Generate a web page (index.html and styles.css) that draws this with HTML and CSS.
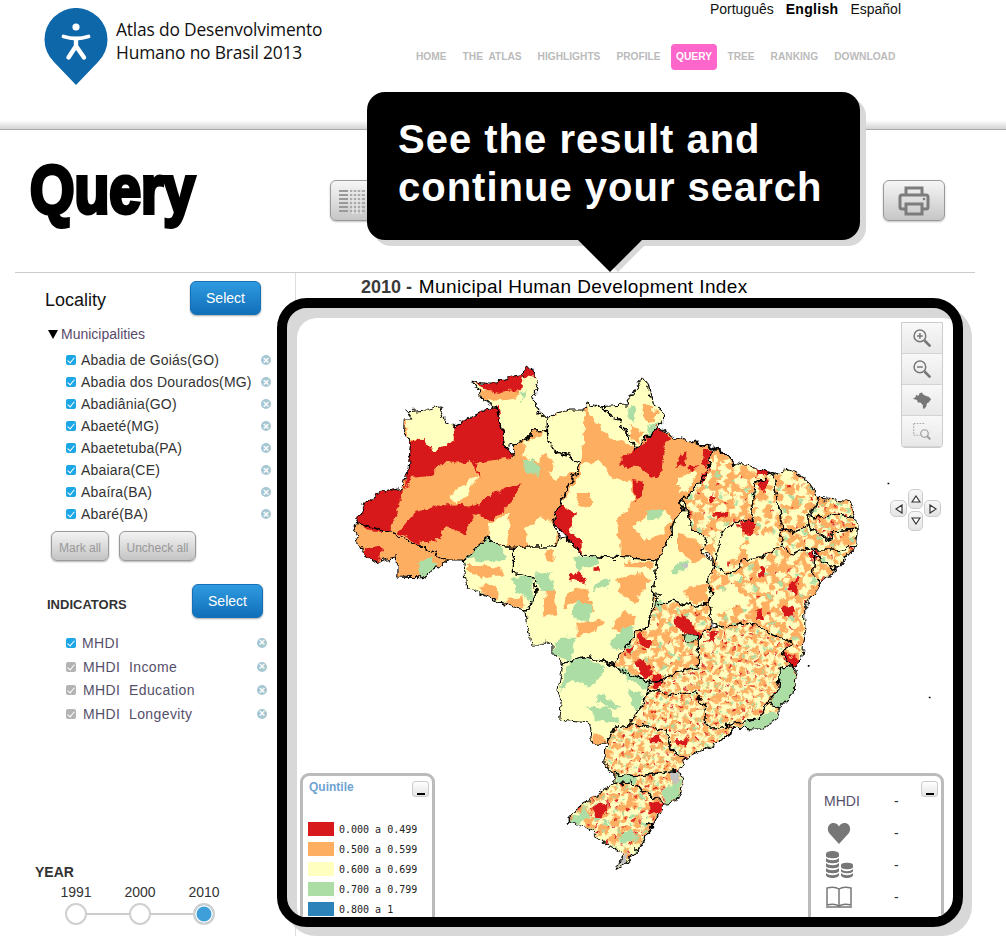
FILE: index.html
```html
<!DOCTYPE html>
<html lang="en">
<head>
<meta charset="utf-8">
<title>Atlas do Desenvolvimento Humano no Brasil 2013 - Query</title>
<link rel="stylesheet" href="styles.css">
</head>
<body>
<header class="site-header">
  <a class="logo">
    <svg class="logo-pin" viewBox="0 0 64 78" width="64" height="78">
      <path d="M32 77 L10 54 A31.5 31.5 0 1 1 54 54 Z" fill="#0d67a9"/>
      <circle cx="32" cy="19" r="3.6" fill="#fff"/>
      <path d="M19.500 28.500 Q32 32.500 44.500 28.500" fill="none" stroke="#fff" stroke-width="3.8" stroke-linecap="round"/>
      <path d="M32 31 V38 M32 38 L24.500 49.500 M32 38 L40 49.500" fill="none" stroke="#fff" stroke-width="4.4" stroke-linecap="round"/>
    </svg>
    <span class="logo-text">Atlas do Desenvolvimento<br>Humano no Brasil 2013</span>
  </a>
  <div class="header-right">
    <div class="langs"><span>Português</span><strong>English</strong><span>Español</span></div>
    <nav class="nav">
      <a>HOME</a><a>THE ATLAS</a><a>HIGHLIGHTS</a><a>PROFILE</a><a class="active">QUERY</a><a>TREE</a><a>RANKING</a><a>DOWNLOAD</a>
    </nav>
  </div>
</header>
<div class="band"></div>

<section class="page-head">
  <h1 class="page-title">Query</h1>
  <div class="tools">
    <button class="tool-btn">
      <svg viewBox="0 0 26 26" width="26" height="26"><path d="M0 2h9v2H0zM0 6h9v2H0zM0 10h9v2H0zM0 14h9v2H0zM0 18h9v2H0zM0 22h9v2H0z" fill="#999"/><path d="M11 2h15v2H11zM11 6h15v2H11zM11 10h15v2H11zM11 14h15v2H11zM11 18h15v2H11zM11 22h15v2H11z" fill="#aaa"/><path d="M14 0v26M18 0v26M22 0v26" stroke="#e8e8e8" stroke-width="1.5"/></svg>
    </button>
    <button class="tool-btn">
      <svg viewBox="0 0 32 30" width="32" height="30"><path d="M8 9V2h16v7M7 23H4a2 2 0 0 1-2-2V11a2 2 0 0 1 2-2h24a2 2 0 0 1 2 2v10a2 2 0 0 1-2 2h-3M8 18h16v10H8z" fill="none" stroke="#7c7c7c" stroke-width="3"/><circle cx="26" cy="13" r="1.3" fill="#7c7c7c"/></svg>
    </button>
  </div>
</section>

<div class="content">
  <aside class="sidebar">
    <div class="side-head">
      <h2 class="locality-title">Locality</h2>
      <button class="select-btn">Select</button>
    </div>
    <div class="tree-label"><span class="tri"></span>Municipalities</div>
    <ul class="loc-list">
      <li><i class="cb"></i>Abadia de Goiás(GO)<b class="rm">×</b></li>
      <li><i class="cb"></i>Abadia dos Dourados(MG)<b class="rm">×</b></li>
      <li><i class="cb"></i>Abadiânia(GO)<b class="rm">×</b></li>
      <li><i class="cb"></i>Abaeté(MG)<b class="rm">×</b></li>
      <li><i class="cb"></i>Abaetetuba(PA)<b class="rm">×</b></li>
      <li><i class="cb"></i>Abaiara(CE)<b class="rm">×</b></li>
      <li><i class="cb"></i>Abaíra(BA)<b class="rm">×</b></li>
      <li><i class="cb"></i>Abaré(BA)<b class="rm">×</b></li>
    </ul>
    <div class="mark-row">
      <button class="mark-btn mark-a">Mark all</button>
      <button class="mark-btn mark-b">Uncheck all</button>
    </div>
    <div class="side-head ind-head">
      <h3 class="ind-title">INDICATORS</h3>
      <button class="select-btn">Select</button>
    </div>
    <ul class="ind-list">
      <li><i class="cb"></i>MHDI<b class="rm">×</b></li>
      <li><i class="cb off"></i><span class="ind-off">MHDI&nbsp; Income</span><b class="rm">×</b></li>
      <li><i class="cb off"></i><span class="ind-off">MHDI&nbsp; Education</span><b class="rm">×</b></li>
      <li><i class="cb off"></i><span class="ind-off">MHDI&nbsp; Longevity</span><b class="rm">×</b></li>
    </ul>
    <div class="year">
      <div class="year-title">YEAR</div>
      <div class="year-labels"><span>1991</span><span>2000</span><span>2010</span></div>
      <div class="year-track"><i class="dot"></i><i class="dot"></i><i class="dot on"></i></div>
    </div>
  </aside>

  <main class="main">
    <div class="map-title"><strong>2010 -</strong> Municipal Human Development Index</div>
    <div class="frame">
      <svg class="map" viewBox="0 0 1568 1560" width="530" height="520" preserveAspectRatio="none">
        <defs>
          <filter id="rough" x="-4%" y="-4%" width="108%" height="108%" color-interpolation-filters="sRGB">
            <feTurbulence type="fractalNoise" baseFrequency=".045" numOctaves="3" seed="7" result="n"/>
            <feDisplacementMap in="SourceGraphic" in2="n" scale="26" xChannelSelector="R" yChannelSelector="G"/>
          </filter>
          <path id="t" d="M0 0h22v14h12v18h-20v10h-14z M48 6h26v20h-18v12h-14z M82 30h18v26h-10v-8h-14z M30 48h22v16h10v18h-26v-12h-6z M0 60h14v22h-14z M70 66h22v14h8v20h-24v-10h-6z M12 88h24v12h-24z M46 88h12v12h-12z"/>
          <pattern id="py" width="100" height="100" patternUnits="userSpaceOnUse" patternTransform="rotate(17)"><rect width="100" height="100" fill="#ffffbf"/><use href="#t" fill="#fdae61"/></pattern>
          <pattern id="po" width="100" height="100" patternUnits="userSpaceOnUse" patternTransform="translate(17 31) rotate(-23)"><rect width="100" height="100" fill="#fdae61"/><use href="#t" fill="#ffffbf"/></pattern>
          <pattern id="pyf" width="100" height="100" patternUnits="userSpaceOnUse" patternTransform="scale(.7) rotate(31)"><rect width="100" height="100" fill="#ffffbf"/><use href="#t" fill="#fdae61"/></pattern>
          <pattern id="pof" width="100" height="100" patternUnits="userSpaceOnUse" patternTransform="scale(.8) translate(9 41) rotate(11)"><rect width="100" height="100" fill="#fdae61"/><use href="#t" fill="#ffffbf"/></pattern>
          <pattern id="ps" width="140" height="130" patternUnits="userSpaceOnUse" patternTransform="rotate(9)">
            <path fill="#d7191c" d="M10 20h5v8h-5zM110 30h6v9h-6zM38 62h9v5h-9zM126 92h6v6h-6zM70 112h9v5h-9z"/>
            <path fill="#abdda4" d="M30 30h14v10h-14zM80 40h12v12h-12zM120 60h14v10h-14zM6 74h12v12h-12zM54 90h12v10h-12zM100 104h12v14h-12z"/>
          </pattern>
          <pattern id="psf" width="140" height="130" patternUnits="userSpaceOnUse" patternTransform="scale(.6) translate(23 11) rotate(-14)">
            <path fill="#d7191c" d="M10 20h8v12h-8zM60 8h12v8h-12zM110 30h10v14h-10zM38 62h14v8h-14zM88 70h8v14h-8zM126 92h10v8h-10zM20 104h8v14h-8zM70 112h14v8h-14z"/>
            <path fill="#abdda4" d="M30 30h14v10h-14zM80 40h12v12h-12zM120 60h14v10h-14zM6 74h12v12h-12zM54 90h12v10h-12zM100 104h12v14h-12z"/>
          </pattern>

          <polygon id="ac" points="40,510 50,490 150,520 225,550 320,600 285,625 240,650 168,648 170,590 105,605 70,580"/>
          <polygon id="am" points="48,490 75,430 110,400 185,385 200,340 210,240 188,225 190,180 218,180 198,155 260,150 295,140 305,175 335,195 440,145 465,140 475,190 487,260 515,290 513,255 535,245 550,245 572,212 613,212 615,240 640,275 710,305 628,485 650,535 635,560 513,562 480,560 440,532 365,600 320,600 225,550 150,520"/>
          <polygon id="rr" points="388,60 425,70 465,68 520,50 545,45 548,20 570,22 575,50 588,70 570,110 585,150 613,175 613,212 572,212 550,245 535,245 513,255 487,260 475,190 465,140 420,120 412,95"/>
          <polygon id="ap" points="770,140 845,135 895,52 910,70 925,135 955,160 958,180 940,200 915,225 875,265 840,210 820,175"/>
          <polygon id="pa" points="613,175 640,160 680,150 725,150 730,128 770,140 820,175 840,210 875,265 915,225 940,200 990,232 1040,245 1090,260 1100,270 1090,320 1070,360 1040,395 1005,425 1020,450 990,480 975,530 940,600 715,585 670,530 628,485 710,305 640,275 615,240"/>
          <polygon id="ro" points="365,600 440,532 480,560 513,562 513,640 575,655 580,700 550,750 490,735 440,710 375,680"/>
          <polygon id="mt" points="513,562 635,560 650,535 670,530 715,585 940,600 925,700 945,705 920,760 915,800 885,810 830,880 810,915 775,900 720,890 660,910 630,880 630,853 565,852 555,800 550,750 580,700 575,655 513,640"/>
          <polygon id="to" points="1005,425 1020,430 1040,510 1085,530 1070,575 1110,618 1085,665 1100,700 1090,730 1050,740 980,720 945,735 925,700 940,600 975,530 990,480 1020,450"/>
          <polygon id="ma" points="1100,270 1140,280 1165,310 1215,320 1250,330 1280,340 1230,370 1215,460 1225,480 1180,485 1125,520 1110,618 1085,575 1070,575 1085,530 1040,510 1020,430 1005,425 1040,395 1070,360 1090,320"/>
          <polygon id="pi" points="1280,340 1290,400 1310,520 1305,555 1250,590 1190,600 1185,625 1150,640 1110,618 1125,520 1180,485 1225,480 1215,460 1230,370"/>
          <polygon id="ce" points="1280,340 1330,330 1370,350 1420,415 1385,470 1385,500 1345,515 1310,505 1290,400"/>
          <polygon id="rn" points="1420,415 1510,425 1525,470 1470,462 1440,470 1390,470"/>
          <polygon id="pb" points="1385,470 1440,470 1470,462 1525,470 1530,510 1460,515 1450,540 1420,520 1385,500"/>
          <polygon id="pe" points="1310,505 1345,515 1385,500 1420,520 1450,540 1460,515 1530,510 1525,560 1470,570 1400,570 1385,560 1330,585 1305,555"/>
          <polygon id="al" points="1400,570 1470,570 1525,560 1470,625 1420,600"/>
          <polygon id="se" points="1405,590 1420,600 1470,625 1420,670 1400,645"/>
          <polygon id="ba" points="1110,618 1150,640 1185,625 1190,600 1250,590 1305,555 1330,585 1385,560 1405,590 1400,645 1420,670 1375,735 1375,830 1365,900 1340,920 1310,880 1335,845 1280,825 1230,795 1185,790 1115,805 1100,770 1090,730 1100,700 1085,665"/>
          <polygon id="go" points="925,700 945,735 980,720 1050,740 1090,730 1100,770 1100,800 1060,840 1060,920 1000,935 940,965 915,965 830,930 810,915 830,880 885,810 915,800 920,760"/>
          <polygon id="ms" points="660,910 720,890 775,900 810,915 830,930 915,965 915,990 880,1060 850,1095 810,1105 790,1150 745,1150 735,1085 650,1078 655,1020 645,990"/>
          <polygon id="mg" points="915,965 940,965 1000,935 1060,920 1060,840 1100,800 1115,805 1185,790 1230,795 1280,825 1335,845 1310,880 1340,920 1300,925 1295,990 1265,1030 1240,1075 1100,1105 1085,1095 1080,1050 1050,995 990,1005 915,990"/>
          <polygon id="es" points="1340,920 1350,930 1340,1000 1300,1045 1265,1030 1295,990 1300,925"/>
          <polygon id="rj" points="1265,1030 1300,1045 1295,1075 1250,1108 1175,1105 1140,1095 1240,1075"/>
          <polygon id="sp" points="915,990 990,1005 1050,995 1080,1050 1085,1095 1100,1105 1140,1095 1175,1105 1130,1140 1085,1165 1020,1195 980,1170 965,1110 880,1095 850,1095 880,1060"/>
          <polygon id="pr" points="810,1105 850,1095 880,1095 965,1110 980,1170 1020,1195 1005,1230 905,1245 870,1250 810,1240 780,1210 790,1150"/>
          <polygon id="sc" points="810,1240 870,1250 905,1245 1005,1230 1015,1280 995,1325 960,1330 905,1295 860,1270 810,1270"/>
          <polygon id="rs" points="810,1270 860,1270 905,1295 960,1330 930,1390 880,1470 845,1510 820,1525 835,1480 800,1460 750,1420 700,1390 665,1390 720,1330"/>
          <polygon id="df" points="1020,825 1055,825 1055,845 1020,845"/>

          <clipPath id="br">
            <use href="#ac"/><use href="#am"/><use href="#rr"/><use href="#ap"/><use href="#pa"/><use href="#ro"/><use href="#mt"/><use href="#to"/><use href="#ma"/><use href="#pi"/><use href="#ce"/><use href="#rn"/><use href="#pb"/><use href="#pe"/><use href="#al"/><use href="#se"/><use href="#ba"/><use href="#go"/><use href="#ms"/><use href="#mg"/><use href="#es"/><use href="#rj"/><use href="#sp"/><use href="#pr"/><use href="#sc"/><use href="#rs"/>
          </clipPath>
        </defs>

        <g filter="url(#rough)">
        <g fill="#fdae61"><use href="#ac"/><use href="#am"/><use href="#pa"/></g>
        <g fill="#ffffbf"><use href="#rr"/><use href="#ap"/><use href="#ro"/><use href="#mt"/><use href="#to"/><use href="#ms"/></g>
        <g fill="url(#po)"><use href="#ma"/><use href="#pb"/><use href="#pe"/><use href="#al"/><use href="#se"/><use href="#ba"/></g>
        <g fill="url(#py)"><use href="#pi"/><use href="#ce"/><use href="#rn"/><use href="#rs"/></g>
        <g fill="url(#pof)"><use href="#go"/></g>
        <g fill="url(#pyf)"><use href="#mg"/><use href="#sp"/><use href="#pr"/><use href="#sc"/><use href="#es"/><use href="#rj"/></g>
        <g fill="url(#ps)"><use href="#ma"/><use href="#pi"/><use href="#ce"/><use href="#rn"/><use href="#pb"/><use href="#pe"/><use href="#al"/><use href="#se"/><use href="#ba"/><use href="#go"/><use href="#rs"/></g>
        <g fill="url(#psf)"><use href="#mg"/><use href="#sp"/><use href="#pr"/><use href="#sc"/><use href="#rs"/><use href="#pb"/><use href="#rn"/></g>

        <g clip-path="url(#br)">
          <g fill="#ffffbf">
            <polygon points="190,150 305,140 335,195 340,240 275,275 250,240 200,235"/>
            <polygon points="550,245 613,212 615,240 640,275 710,305 690,340 635,360 590,310 540,285"/>
            <polygon points="320,410 412,340 380,400 345,432"/>
            <polygon points="440,490 500,460 495,562 440,535"/>
            <polygon points="545,510 600,470 640,500 635,562 560,562"/>
            <polygon points="613,175 680,150 725,150 715,305 640,275 615,240"/>
            <polygon points="730,128 770,140 820,175 875,265 800,230 770,200 740,170"/>
            <polygon points="690,380 720,310 770,305 790,345 860,370 870,420 820,480 830,600 715,590 680,510 695,460 650,435"/>
            <polygon points="870,500 900,470 960,450 985,480 950,520 900,540"/>
            <polygon points="1000,350 1060,330 1030,390 1000,400"/>
            <polygon points="1110,520 1180,490 1200,540 1160,590 1110,610"/>
            <polygon points="1190,560 1240,520 1300,530 1290,560 1220,600"/>
            <polygon points="1090,700 1170,680 1210,720 1130,760 1100,770"/>
          </g>
          <g fill="#fdae61">
            <polygon points="415,90 535,85 530,115 470,122 420,120"/>
            <polygon points="375,615 470,620 490,650 430,650 380,640"/>
            <polygon points="410,680 460,670 470,720 430,705"/>
            <polygon points="490,720 540,710 545,745 490,735"/>
            <polygon points="820,660 880,640 920,660 890,700 870,730 830,700"/>
            <polygon points="610,690 635,690 640,760 600,770"/>
            <polygon points="670,700 730,680 750,760 700,720 660,750"/>
            <polygon points="800,800 840,750 880,770 850,820 820,810"/>
            <polygon points="700,790 780,780 760,810 700,830"/>
            <polygon points="605,570 635,570 635,610 605,610"/>
            <polygon points="840,605 930,605 925,625 840,620"/>
            <polygon points="1000,520 1060,540 1080,590 1050,610 1000,570"/>
            <polygon points="1020,690 1085,670 1090,730 1030,730"/>
            <polygon points="900,125 940,160 920,190 890,175"/>
            <polygon points="860,195 900,220 880,250 855,225"/>
            <polygon points="700,400 740,395 740,440 705,440"/>
            <polygon points="745,1150 790,1150 780,1130 750,1120"/>
            <polygon points="600,275 635,310 620,345 590,310"/>
          </g>
          <g fill="#d7191c">
            <polygon points="335,195 440,145 470,135 487,260 515,290 400,310 420,360 385,305 300,310 270,345 210,350 195,390 205,240 250,240 275,275 340,240"/>
            <polygon points="185,385 110,400 75,430 48,490 100,515 150,515 185,400"/>
            <polygon points="300,435 400,440 430,410 535,370 520,410 450,482 400,460 370,520 310,500 280,550 230,548 170,518 220,460"/>
            <polygon points="388,60 425,70 465,68 520,50 545,45 535,90 470,95 430,88"/>
            <polygon points="548,20 570,22 575,55 545,48"/>
            <polygon points="75,565 130,560 110,605 70,585"/>
            <polygon points="830,290 900,250 940,195 975,230 960,260 950,340 930,355 880,320 830,320"/>
            <polygon points="865,360 895,365 900,415 875,420"/>
            <polygon points="650,435 695,460 680,510 715,545 715,590 670,530 628,485"/>
            <polygon points="1000,290 1025,280 1020,315 995,320"/>
            <polygon points="1030,320 1060,315 1040,340"/>
            <polygon points="1075,270 1100,270 1085,320 1070,315"/>
            <polygon points="1070,340 1090,325 1070,375"/>
            <polygon points="685,645 700,630 730,660 725,670 680,660"/>
            <polygon points="750,622 770,622 772,634 750,636"/>
            <polygon points="990,770 1015,762 1040,790 1070,825 1060,840 1020,820 990,795"/>
            <polygon points="1090,815 1115,815 1105,848 1090,840"/>
            <polygon points="885,815 925,850 910,865 885,850"/>
            <polygon points="868,900 895,895 925,950 900,955"/>
            <polygon points="845,865 870,860 860,885 845,880"/>
            <polygon points="1240,620 1258,620 1255,655 1240,650"/>
            <polygon points="1310,740 1340,740 1345,770 1310,765"/>
            <polygon points="1330,670 1355,650 1350,705 1330,700"/>
            <polygon points="1230,755 1250,750 1255,780 1232,778"/>
            <polygon points="1180,490 1225,480 1225,520 1190,515"/>
            <polygon points="1240,360 1260,350 1265,390 1245,395"/>
            <polygon points="1110,460 1150,455 1140,470 1110,472"/>
            <polygon points="1090,410 1115,405 1100,430"/>
            <polygon points="1310,880 1365,900 1340,925"/>
            <polygon points="1390,565 1420,575 1410,600 1385,585"/>
            <polygon points="750,1340 790,1330 780,1370 755,1370"/>
            <polygon points="915,1325 960,1330 940,1360 915,1360"/>
            <polygon points="925,950 950,945 945,990 925,985"/>
            <polygon points="920,1130 950,1130 945,1150 920,1150"/>
            <polygon points="1000,1135 1030,1135 1025,1160 1000,1155"/>
            <polygon points="1225,325 1280,335 1270,345 1235,345"/>
          </g>
          <g fill="#abdda4">
            <polygon points="535,95 552,90 540,128"/>
            <polygon points="540,300 575,300 590,345 550,340"/>
            <polygon points="370,590 440,535 470,550 490,600 420,605"/>
            <polygon points="510,650 570,650 570,720 520,700"/>
            <polygon points="575,640 620,640 635,695 590,695"/>
            <polygon points="650,830 700,830 680,905 630,880"/>
            <polygon points="700,720 740,730 740,790 680,770"/>
            <polygon points="690,590 760,590 770,610 700,630"/>
            <polygon points="760,665 805,655 790,680 750,690"/>
            <polygon points="800,840 850,800 870,800 860,860 810,870"/>
            <polygon points="650,990 680,900 720,890 790,925 740,980 690,960"/>
            <polygon points="820,915 915,965 910,990 850,960"/>
            <polygon points="730,1040 790,1040 830,1090 760,1080"/>
            <polygon points="770,1000 830,1040 810,1050 760,1020"/>
            <polygon points="850,990 900,1000 880,1050 860,1020"/>
            <polygon points="850,140 875,135 875,185 850,175"/>
            <polygon points="900,205 950,180 915,225"/>
            <polygon points="905,455 960,450 950,470 910,480"/>
            <polygon points="990,610 1030,600 1020,640 985,640"/>
            <polygon points="930,730 960,720 945,760"/>
            <polygon points="225,610 270,590 285,625 240,650"/>
            <polygon points="1300,925 1345,925 1340,1000 1300,1045 1270,1030 1295,990"/>
            <polygon points="1200,1085 1290,1050 1295,1075 1250,1108 1180,1105"/>
            <polygon points="815,1240 880,1250 870,1270 815,1270"/>
            <polygon points="668,1390 720,1350 740,1370 700,1395"/>
            <polygon points="955,1290 1010,1260 1000,1320 960,1330"/>
            <polygon points="830,1420 870,1410 860,1450 830,1450"/>
          </g>
          <g fill="#c2c2c2">
            <polygon points="1010,612 1030,612 1030,625 1010,625"/>
            <polygon points="975,1235 1005,1232 1000,1270 980,1265"/>
            <polygon points="830,1490 855,1475 845,1510 825,1515"/>
          </g>
        </g>
        <use href="#df" fill="#abdda4"/>

        <g fill="none" stroke="#000" stroke-width="3.2" stroke-linejoin="round">
          <use href="#ac"/><use href="#am"/><use href="#rr"/><use href="#ap"/><use href="#pa"/><use href="#ro"/><use href="#mt"/><use href="#to"/><use href="#ma"/><use href="#pi"/><use href="#ce"/><use href="#rn"/><use href="#pb"/><use href="#pe"/><use href="#al"/><use href="#se"/><use href="#ba"/><use href="#go"/><use href="#ms"/><use href="#mg"/><use href="#es"/><use href="#rj"/><use href="#sp"/><use href="#pr"/><use href="#sc"/><use href="#rs"/><use href="#df"/>
          <path d="M1030 245L1090 258L1140 280L1165 310" stroke-width="6"/>
          <path d="M1125 1145L1150 1120L1175 1105" stroke-width="6"/>
          <path d="M905 1390L925 1400L885 1460L870 1465" stroke-width="5"/>
        </g>
        </g>
        <path d="M1384 915h5v5h-5zM1620 368h5v5h-5zM1742 1010h5v5h-5z" fill="#000"/>
      </svg>

      <div class="zoom-bar">
        <button class="zoom-btn"><svg viewBox="0 0 24 24" width="20" height="20"><circle cx="9.5" cy="9.5" r="7" fill="none" stroke="#777" stroke-width="1.8"/><path d="M6 9.5h7M9.5 6v7" stroke="#777" stroke-width="1.8"/><path d="M15 15l7 7" stroke="#777" stroke-width="3.2"/></svg></button>
        <button class="zoom-btn"><svg viewBox="0 0 24 24" width="20" height="20"><circle cx="9.5" cy="9.5" r="7" fill="none" stroke="#777" stroke-width="1.8"/><path d="M6 9.5h7" stroke="#777" stroke-width="1.8"/><path d="M15 15l7 7" stroke="#777" stroke-width="3.2"/></svg></button>
        <button class="zoom-btn"><svg viewBox="0 0 24 24" width="20" height="20"><path d="M1 10l3-1 1-3 3 1 1-3 3-1 1 2 3 2 4 1 3 3-3 4-2 1-1 4-3 3-1-2 0-3-3-3-3 0-1-3-3-1-2-1z" fill="#777"/></svg></button>
        <button class="zoom-btn"><svg viewBox="0 0 24 24" width="20" height="20"><path d="M2 3h13M2 3v14h8" fill="none" stroke="#aaa" stroke-width="1.3" stroke-dasharray="2 1.5"/><circle cx="15" cy="15" r="4.5" fill="none" stroke="#999" stroke-width="1.4"/><path d="M18 18l4 4" stroke="#999" stroke-width="2.2"/></svg></button>
      </div>

      <div class="pan">
        <button class="pan-btn up"><svg viewBox="0 0 10 8" width="10" height="8"><path d="M5 1L9 7H1z" fill="#fff" stroke="#333" stroke-width="1.2"/></svg></button>
        <button class="pan-btn left"><svg viewBox="0 0 8 10" width="8" height="10"><path d="M1 5L7 1V9z" fill="#fff" stroke="#333" stroke-width="1.2"/></svg></button>
        <button class="pan-btn right"><svg viewBox="0 0 8 10" width="8" height="10"><path d="M7 5L1 1V9z" fill="#fff" stroke="#333" stroke-width="1.2"/></svg></button>
        <button class="pan-btn down"><svg viewBox="0 0 10 8" width="10" height="8"><path d="M5 7L9 1H1z" fill="#fff" stroke="#333" stroke-width="1.2"/></svg></button>
      </div>

      <div class="panel legend">
        <div class="legend-title">Quintile</div>
        <button class="min-btn"></button>
        <ul class="legend-list">
          <li><i class="sw s1"></i>0.000 a 0.499</li>
          <li><i class="sw s2"></i>0.500 a 0.599</li>
          <li><i class="sw s3"></i>0.600 a 0.699</li>
          <li><i class="sw s4"></i>0.700 a 0.799</li>
          <li><i class="sw s5"></i>0.800 a 1</li>
        </ul>
      </div>

      <div class="panel values">
        <button class="min-btn"></button>
        <div class="val-row"><span class="val-key val-text">MHDI</span><span class="val-dash">-</span></div>
        <div class="val-row"><span class="val-key"><svg viewBox="0 0 24 22" width="24" height="22"><path d="M12 22L2.5 11.5C-1 7 1.500 1 6.500 1c2.500 0 4.500 1.500 5.500 3.500C13 2.500 15 1 17.500 1c5 0 7.500 6 4 10.500z" fill="#777"/></svg></span><span class="val-dash">-</span></div>
        <div class="val-row"><span class="val-key"><svg viewBox="0 0 30 28" width="30" height="28"><path d="M2 3c0-4 13-4 13 0v2c0 3-13 3-13 0zM2 7c3 3 10 3 13 0v3c0 3-13 3-13 0zM2 12c3 3 10 3 13 0v3c0 3-13 3-13 0zM2 17c3 3 10 3 13 0v3c0 3-13 3-13 0zM2 22c3 3 10 3 13 0v2c0 4-13 4-13 0zM17 14c0-3 12-3 12 0v2c0 3-12 3-12 0zM17 18c3 3 9 3 12 0v2c0 3-12 3-12 0zM17 22c3 3 9 3 12 0v2c0 4-12 4-12 0z" fill="#777"/></svg></span><span class="val-dash">-</span></div>
        <div class="val-row"><span class="val-key"><svg viewBox="0 0 28 22" width="28" height="22"><path d="M14 3C11 1 6 1 2 2v17c4-1 9-1 12 1 3-2 8-2 12-1V2c-4-1-9-1-12 1zM14 3v17M1 21h26" fill="none" stroke="#777" stroke-width="1.500"/></svg></span><span class="val-dash">-</span></div>
      </div>
    </div>
  </main>
</div>

<div class="callout">
  <p class="callout-text">See the result and<br>continue your search</p>
</div>
</body>
</html>
```
FILE: styles.css
```css
* { box-sizing: border-box; }
html, body { margin: 0; padding: 0; }
body {
  width: 1006px;
  height: 936px;
  overflow: hidden;
  position: relative;
  background: #fff;
  font-family: "Liberation Sans", Arial, sans-serif;
  color: #222;
}
ul { list-style: none; margin: 0; padding: 0; }
h1, h2, h3, p { margin: 0; font-weight: normal; }
button { font-family: inherit; padding: 0; cursor: pointer; }

/* Header */
.site-header { display: flex; height: 120px; padding-left: 44px; }
.logo { display: flex; align-items: flex-start; width: 366px; }
.logo-pin { margin-top: 8px; flex: none; }
.logo-text {
  margin: 18px 0 0 8px;
  font-family: "Open Sans", sans-serif;
  font-size: 17.400px;
  line-height: 23px;
  color: #111;
  white-space: nowrap;
  letter-spacing: -.18px;
}
.header-right { width: 491px; }
.langs {
  display: flex;
  justify-content: flex-end;
  gap: 12px;
  padding-top: 1px;
  height: 44px;
  font-size: 14px;
  line-height: 16px;
  color: #111;
}
.langs strong { color: #000; letter-spacing: .3px; }
.nav { display: flex; gap: 4px; height: 26px; }
.nav a {
  padding: 0 6px;
  font-size: 10.200px;
  font-weight: bold;
  line-height: 26px;
  word-spacing: 3px;
  color: #bbb;
  white-space: nowrap;
}
.nav a.active { padding: 0 5.500px; background: #ff66cc; color: #fff; border-radius: 4px; }
.band {
  height: 10px;
  background: linear-gradient(#fff, #d4d4d4);
  border-bottom: 1px solid #a9a9a9;
}

/* Page head */
.page-head { display: flex; height: 142px; padding-left: 30px; position: relative; }
.page-title {
  width: 300px;
  margin-top: 21px;
  font-size: 68px;
  line-height: 76px;
  font-weight: bold;
  color: #000;
  -webkit-text-stroke: 4px #000;
  transform: scaleX(.84);
  transform-origin: left center;
}
.tools { display: flex; justify-content: space-between; width: 615px; margin-top: 50px; }
.tool-btn {
  display: flex;
  align-items: center;
  justify-content: center;
  width: 62px;
  height: 41px;
  border: 1px solid #999;
  border-radius: 6px;
  background: linear-gradient(#f6f6f6, #c6c6c6);
  box-shadow: 0 1px 2px rgba(0,0,0,.25);
}
.tool-btn:first-child { justify-content: flex-start; padding-left: 8px; }

/* Content */
.content {
  display: flex;
  margin: 0 31px 0 15px;
  height: 664px;
  border-top: 1px solid #ccc;
}
.sidebar {
  display: flex;
  flex-direction: column;
  width: 281px;
  border-right: 1px solid #ddd;
  padding-top: 8px;
}
.side-head { display: flex; justify-content: space-between; align-items: center; height: 34px; }
.locality-title { margin-left: 30px; font-size: 18px; color: #111; padding-top: 4px; }
.select-btn {
  width: 71px;
  height: 34px;
  margin-right: 34px;
  border: 1px solid #1570b5;
  border-radius: 6px;
  background: linear-gradient(#2f9be0, #116fb9);
  color: #fff;
  font-size: 14px;
  box-shadow: 0 1px 2px rgba(0,0,0,.35);
}
.ind-head .select-btn { margin-right: 32px; }
.tree-label {
  display: flex;
  align-items: center;
  height: 20px;
  margin: 9px 0 5px 33px;
  font-size: 14px;
  color: #5a4a6a;
}
.tri {
  width: 0;
  height: 0;
  margin-right: 3px;
  border-left: 5px solid transparent;
  border-right: 5px solid transparent;
  border-top: 9px solid #000;
}
.loc-list { margin-left: 51px; }
.loc-list li, .ind-list li {
  display: flex;
  align-items: center;
  font-size: 14px;
  color: #333;
  white-space: nowrap;
}
.loc-list li { height: 22px; width: 205px; letter-spacing: .18px; }
.loc-list .cb { margin-right: 5px; }
.cb {
  position: relative;
  flex: none;
  width: 10px;
  height: 10px;
  border-radius: 2px;
  background: #1ba6e6;
  margin-right: 6px;
}
.cb::after {
  content: "";
  position: absolute;
  left: 3px;
  top: 1px;
  width: 3px;
  height: 6px;
  border: solid #fff;
  border-width: 0 1.500px 1.500px 0;
  transform: rotate(40deg);
}
.cb.off { background: #b4b4b4; }
.rm {
  flex: none;
  display: flex;
  align-items: center;
  justify-content: center;
  width: 10px;
  height: 10px;
  margin-left: auto;
  border-radius: 50%;
  background: #a6c6d2;
  color: #fff;
  font-size: 11px;
  line-height: 1;
}
.mark-row { display: flex; gap: 10px; margin: 6px 0 0 36px; }
.mark-btn {
  height: 30px;
  padding-top: 3px;
  border: 1px solid #999;
  border-radius: 6px;
  background: linear-gradient(#f3f3f3, #c4c4c4);
  color: #999;
  font-size: 12px;
  box-shadow: 0 1px 2px rgba(0,0,0,.3);
}
.mark-a { width: 58px; }
.mark-b { width: 77px; }
.ind-head { margin-top: 23px; }
.ind-title { margin-left: 32px; font-size: 13px; font-weight: bold; color: #333; padding-top: 6px; }
.ind-list { margin: 13px 0 0 51px; }
.ind-list li { height: 23.700px; width: 201px; color: #55506a; letter-spacing: .4px; }
.ind-list li .rm { letter-spacing: 0; }
.ind-off { margin-left: 1px; }
.year { margin-top: auto; padding-bottom: 11px; }
.year-title { margin-left: 20px; font-size: 14px; font-weight: bold; line-height: 16px; color: #333; }
.year-labels {
  display: grid;
  grid-template-columns: repeat(3, 64px);
  margin: 4px 0 3px 29px;
  font-size: 14px;
  line-height: 16px;
  text-align: center;
  color: #333;
}
.year-track {
  display: flex;
  justify-content: space-between;
  width: 150px;
  margin-left: 50px;
  background: linear-gradient(#ccc, #ccc) center / 100% 2px no-repeat;
}
.dot {
  width: 22px;
  height: 22px;
  border: 2px solid #d0d0d0;
  border-radius: 50%;
  background: #fff;
}
.dot.on { background: #3e9fd9; box-shadow: inset 0 0 0 1.500px #fff; }

/* Main */
.main { flex: 1; min-width: 0; margin-left: -19px; }
.map-title {
  height: 25px;
  padding-left: 84px;
  font-size: 19px;
  line-height: 27px;
  color: #000;
  letter-spacing: .4px;
  white-space: nowrap;
}
.map-title strong { margin-right: 1px; color: #3a3a3a; font-size: 18px; letter-spacing: 0; }
.frame {
  position: relative;
  width: 686px;
  height: 629px;
  padding: 52px 0 0 53px;
  border: 10px solid #000;
  border-radius: 30px;
  background: #fff;
  overflow: hidden;
  box-shadow: inset 10px 10px 0 #d8d8d8, 9px 9px 0 #d8d8d8;
}
.map { display: block; overflow: visible; }

.zoom-bar {
  position: absolute;
  left: 614px;
  top: 14px;
  display: flex;
  flex-direction: column;
  width: 42px;
  border: 1px solid #ccc;
  border-radius: 0 0 4px 4px;
}
.zoom-btn {
  display: flex;
  align-items: center;
  justify-content: center;
  height: 31px;
  border: 0;
  border-bottom: 1px solid #d4d4d4;
  background: linear-gradient(#f8f8f8, #e8e8e8);
}
.pan { position: absolute; left: 603px; top: 181px; width: 52px; height: 44px; }
.pan-btn {
  position: absolute;
  display: flex;
  align-items: center;
  justify-content: center;
  border: 1px solid #ccc;
  border-radius: 5px;
  background: linear-gradient(#f8f8f8, #e4e4e4);
}
.pan-btn.up { left: 18px; top: 0; width: 15px; height: 20px; }
.pan-btn.left { left: 0; top: 11px; width: 17px; height: 17px; }
.pan-btn.right { left: 34px; top: 11px; width: 17px; height: 17px; }
.pan-btn.down { left: 18px; top: 22px; width: 15px; height: 20px; }

.panel {
  position: absolute;
  top: 465px;
  height: 200px;
  border: 3px solid #bbb;
  border-radius: 9px;
  background: #fff;
}
.legend { left: 13px; width: 135px; padding: 3px 0 0 5px; }
.values { left: 521px; width: 136px; padding-top: 9px; }
.legend-title { margin-left: 1px; font-size: 12px; font-weight: bold; color: #6ea3d2; line-height: 16px; }
.min-btn {
  position: absolute;
  right: 3px;
  top: 5px;
  width: 17px;
  height: 16px;
  border: 1px solid #ccc;
  border-radius: 3px;
  background: linear-gradient(#fff, #e4e4e4);
}
.min-btn::after {
  content: "";
  display: block;
  width: 8px;
  height: 2px;
  margin: 9px auto 0;
  background: #000;
}
.legend-list { margin-top: 24px; }
.legend-list li {
  display: flex;
  align-items: center;
  height: 20px;
  font-family: "DejaVu Sans Mono", monospace;
  font-size: 10px;
  color: #222;
  white-space: nowrap;
}
.sw { width: 26px; height: 14px; margin-right: 5px; flex: none; }
.s1 { background: #d7191c; }
.s2 { background: #fdae61; }
.s3 { background: #ffffbf; }
.s4 { background: #abdda4; }
.s5 { background: #2b83ba; }
.val-row { display: flex; align-items: center; height: 32px; padding-left: 13px; }
.val-key { display: flex; justify-content: center; width: 30px; margin-right: 40px; flex: none; }
.val-text { justify-content: flex-start; font-size: 14px; color: #55506a; }
.val-dash { font-size: 14px; color: #333; }

/* Callout */
.callout {
  position: absolute;
  left: 367px;
  top: 92px;
  width: 493px;
  height: 148px;
  padding: 23px 0 0 31px;
  background: #000;
  border-radius: 18px;
  box-shadow: 6px 6px 0 #d8d8d8;
}
.callout::after {
  content: "";
  position: absolute;
  left: 211px;
  top: 148px;
  width: 0;
  height: 0;
  border-left: 32px solid transparent;
  border-right: 32px solid transparent;
  border-top: 32px solid #000;
  filter: drop-shadow(8px 0 0 #d8d8d8);
}
.callout-text {
  font-size: 40px;
  font-weight: bold;
  line-height: 48px;
  color: #fff;
  letter-spacing: 1px;
  white-space: nowrap;
}
```
